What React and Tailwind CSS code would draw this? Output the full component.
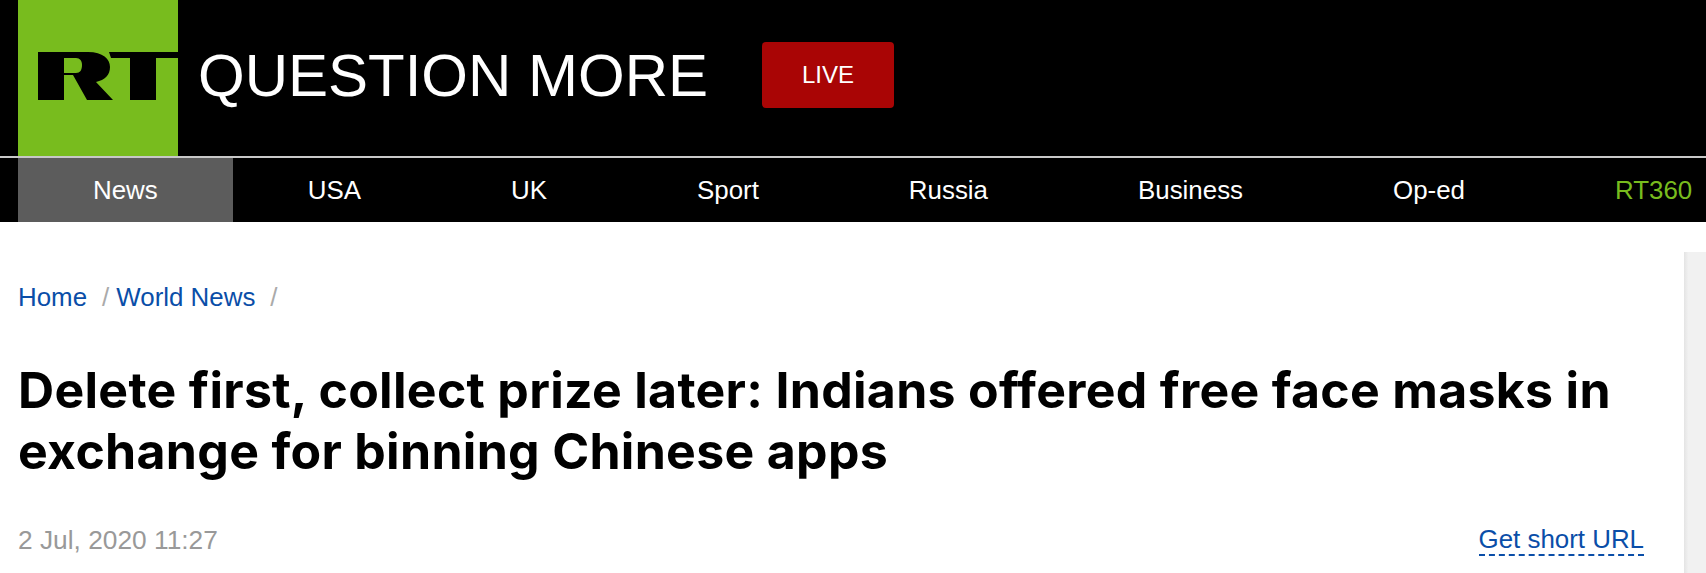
const navItems = ['News', 'USA', 'UK', 'Sport', 'Russia', 'Business', 'Op-ed'];

const Logo = () => (
  <div className="w-[160px] h-[156px] bg-[#78bc1e] shrink-0 flex items-center">
    <svg viewBox="0 0 160 156" className="w-[160px] h-[156px]">
      <path
        fillRule="evenodd"
        d="M20 52H70C85 52 92 59 92 67C92 75 87 80 78 82L95 100H69L55 75H46V100H20ZM46 58V73H58C62 73 64 70 64 65C64 61 62 58 58 58Z"
        fill="#000"
      />
      <path d="M91 52H160V58H138V100H112V58H93Z" fill="#000" />
    </svg>
  </div>
);

const App = () => {
  return (
    <div className="h-[573px] overflow-hidden bg-white font-['Liberation_Sans',Arial,sans-serif]">
      <header className="bg-black pl-[18px] h-[156px] flex">
        <Logo />
        <div className="flex items-start pt-[42px]">
          <span className="ml-[20px] mt-[1px] text-[60px] leading-[66px] text-white">QUESTION MORE</span>
          <a className="ml-[54px] w-[132px] h-[66px] rounded bg-[#a90505] text-white text-[24px] flex items-center justify-center">
            LIVE
          </a>
        </div>
      </header>
      <nav className="bg-black pl-[18px] h-[66px] border-t-2 border-[#c8c8c8] flex items-stretch text-[25.9px] whitespace-nowrap">
        {navItems.map((item, i) => (
          <a
            key={item}
            className={`px-[75px] flex items-center text-white ${i === 0 ? 'bg-[#5c5c5c]' : ''}`}
          >
            {item}
          </a>
        ))}
        <a className="pl-[75px] flex items-center text-[#78bc1e]">RT360</a>
      </nav>
      <div className="flex">
        <main className="w-[1684px] pl-[18px] pr-[40px] pt-[60px]">
          <div className="text-[25.9px] leading-[30px] text-[#0a4ea8] flex">
            <a>Home</a>
            <span className="ml-[15px] mr-[7px] text-[#aaa]">/</span>
            <a>World News</a>
            <span className="ml-[15px] text-[#aaa]">/</span>
          </div>
          <h1 className="mt-[48px] font-['Inter',sans-serif] font-bold text-[50px] tracking-[0.3px] leading-[61px] text-black">
            Delete first, collect prize later: Indians offered free face masks in exchange for binning Chinese apps
          </h1>
          <div className="mt-[43px] flex justify-between items-start leading-[30px]">
            <span className="text-[26.3px] text-[#999]">2 Jul, 2020 11:27</span>
            <a className="text-[25.9px] leading-[29px] text-[#0a4ea8] border-b-2 border-dashed border-[#0a4ea8]">Get short URL</a>
          </div>
        </main>
        <aside className="w-[22px] h-[321px] mt-[30px] bg-gradient-to-r from-[#e4e4e4] to-[#f1f1f1] to-[20%]" />
      </div>
    </div>
  );
};

export default App;
